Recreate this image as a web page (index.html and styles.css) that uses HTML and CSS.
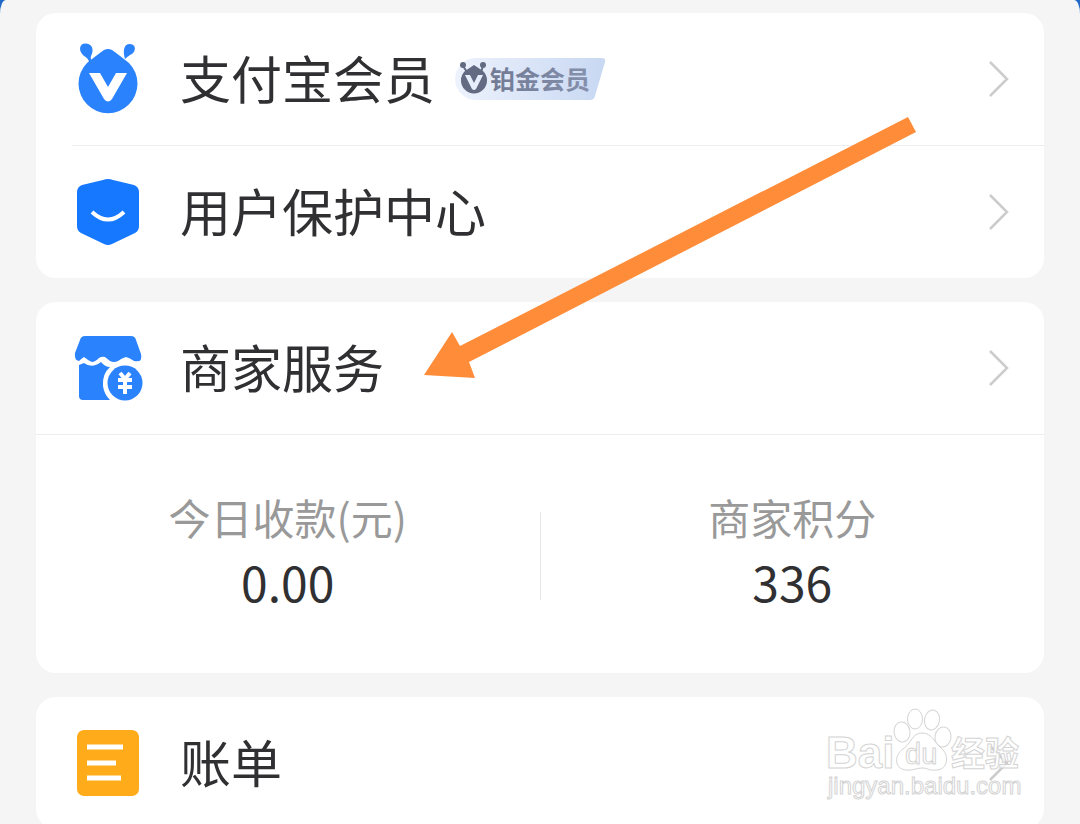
FILE: index.html
```
<!DOCTYPE html>
<html lang="zh-CN">

<head>
  <meta charset="UTF-8">
  <meta name="viewport" content="width=device-width, initial-scale=1.0">
  <title>支付宝</title>
  <link rel="stylesheet" href="styles.css">
</head>

<body>
  <main class="page">
    <section class="card">
      <a class="row" href="#">
        <svg class="icon" viewBox="0 7 72 72" aria-hidden="true">
          <path fill="#2a82fc" d="M15 27Q25 19 32 14Q36 12 40 14Q47 19 57 27A29.500 29.500 0 1 1 15 27Z" />
          <path fill="#2a82fc" d="M16 31C18 25 17 23 12 20C6 15 7 7 14 7.500C21 8 22 15 19 20C18 24 20 25 23 25Z" />
          <path fill="#2a82fc" d="M53 23C51 16 51 8 58 8C65 8 64 17 58 19Q55 21 53 23Z" />
          <path fill="#fff" d="M17 37H28L36 51L44 37H55L40 63Q36 68 32 63Z" />
        </svg>
        <span class="row__title">支付宝会员</span>
        <svg class="tag" viewBox="0 0 152 44">
          <defs>
            <linearGradient id="tag-bg">
              <stop offset="0" stop-color="#edf3fd" />
              <stop offset=".45" stop-color="#dce6f8" />
              <stop offset="1" stop-color="#c8d8f2" />
            </linearGradient>
            <linearGradient id="tag-ink">
              <stop offset="0" stop-color="#707a94" />
              <stop offset="1" stop-color="#8590ad" />
            </linearGradient>
          </defs>
          <path fill="url(#tag-bg)" d="M21 1H147Q151 1 150 5L140 39Q139 43 135 43H21A21 21 0 0 1 21 1Z" />
          <path fill="#626b82" d="M10 14L19 8L28 14A13 13 0 1 1 10 14Z" />
          <circle cx="8" cy="8" r="3" fill="#626b82" />
          <circle cx="28" cy="8" r="3" fill="#626b82" />
          <path fill="none" stroke="#626b82" stroke-width="2" d="M8 9L12 15M28 9L26 15" />
          <path fill="#e7eefb" d="M10 18H15L19 26L23 18H28L21 32Q19 34 17 32Z" />
          <text class="tag__text" x="35" y="32" fill="url(#tag-ink)">铂金会员</text>
        </svg>
        <svg class="chevron" viewBox="0 0 22 38" aria-hidden="true"><path d="M2 2L19 19L2 36" /></svg>
      </a>
      <hr class="divider divider--inset">
      <a class="row" href="#">
        <svg class="icon" viewBox="0 0 72 72" aria-hidden="true">
          <path fill="#1677ff" d="M10 9L31 4Q36 2 41 4L62 9Q67 11 67 16V50Q67 55 63 57L40 68Q36 70 32 68L9 57Q5 55 5 50V16Q5 11 10 9Z" />
          <path fill="none" stroke="#fff" stroke-width="4" d="M20 36Q36 51 52 36" />
        </svg>
        <span class="row__title">用户保护中心</span>
        <svg class="chevron" viewBox="0 0 22 38" aria-hidden="true"><path d="M2 2L19 19L2 36" /></svg>
      </a>
    </section>

    <section class="card">
      <a class="row" href="#">
        <svg class="icon" viewBox="0 0 72 72" aria-hidden="true">
          <path fill="#2a82fc" d="M8 8Q9 4 13 4H59Q63 4 64 8L69 22Q71 31 62 29Q58 26 54 25Q50 26 46 29Q42 31 38 29L33 25Q30 24 27 26Q23 30 20 30Q17 29 12 25Q9 27 7 29Q2 28 3 21Z" />
          <path fill="#2a82fc" d="M7 33L12 31Q20 37 29 30Q33 35 38 35Q30 42 31 54Q32 62 38 68H11Q7 68 7 64Z" />
          <circle cx="53" cy="51" r="17.500" fill="#2a82fc" />
          <path fill="none" stroke="#fff" stroke-width="4" d="M48 41L53 47L58 41M46 48H60M46 55H60M53 47V62" />
        </svg>
        <span class="row__title">商家服务</span>
        <svg class="chevron" viewBox="0 0 22 38" aria-hidden="true"><path d="M2 2L19 19L2 36" /></svg>
      </a>
      <hr class="divider">
      <div class="stats">
        <div class="stat">
          <div class="stat__label">今日收款(元)</div>
          <div class="stat__value">0.00</div>
        </div>
        <div class="stats__line"></div>
        <div class="stat">
          <div class="stat__label">商家积分</div>
          <div class="stat__value">336</div>
        </div>
      </div>
    </section>

    <section class="card">
      <a class="row" href="#">
        <svg class="icon" viewBox="0 0 72 72" aria-hidden="true">
          <rect x="5" y="3" width="62" height="66" rx="7" fill="#ffab1a" />
          <path fill="none" stroke="#fff" stroke-width="5" d="M15 20H51M15 36H44M15 51H49" />
        </svg>
        <span class="row__title">账单</span>
        <svg class="chevron" viewBox="0 0 22 38" aria-hidden="true"><path d="M2 2L19 19L2 36" /></svg>
      </a>
    </section>

    <!-- pointer to the merchant row -->
    <svg class="arrow" viewBox="0 0 492 262" aria-hidden="true">
      <path fill="#ff8c38" d="M0 258L28 215L36 229L484 0L492 15L45 245L51 261Z" />
    </svg>

    <!-- watermark -->
    <svg class="watermark" viewBox="0 0 200 100">
      <g class="watermark__shape">
        <text class="watermark__name" x="2" y="64">Bai</text>
        <ellipse cx="78" cy="28" rx="8" ry="10" transform="rotate(-8 78 28)" />
        <ellipse cx="91" cy="15" rx="7.500" ry="10" />
        <ellipse cx="108" cy="16" rx="7.500" ry="10" transform="rotate(12 108 16)" />
        <ellipse cx="119" cy="33" rx="8" ry="10" transform="rotate(8 119 33)" />
        <path d="M98 29C108 29 111 39 117 44C126 51 124 66 112 66C105 67 104 64 98 64C92 64 88 67 82 66C70 65 70 51 79 45C87 40 88 29 98 29Z" />
        <text class="watermark__du" x="81" y="60">du</text>
        <text class="watermark__cjk" x="127" y="62">经验</text>
        <text class="watermark__url" x="4" y="90">jingyan.baidu.com</text>
      </g>
    </svg>
  </main>
</body>

</html>
```
FILE: styles.css
```
* {
  box-sizing: border-box;
}

body {
  margin: 0;
  background: #2069c8;
  font-family: "Noto Sans CJK SC", sans-serif;
  color: #303033;
}

.page {
  position: relative;
  display: flex;
  flex-direction: column;
  gap: 24px;
  height: 100vh;
  padding: 13px 36px 0;
  overflow: hidden;
  background: #f5f5f5;
  border-radius: 6px 6px 0 0 / 14px 14px 0 0;
}

.card {
  flex: none;
  background: #fff;
  border-radius: 20px;
}

.row {
  display: flex;
  align-items: center;
  height: 132px;
  padding: 0 34px 0 36px;
  color: inherit;
  text-decoration: none;
}

.icon {
  flex: none;
  width: 72px;
  height: 72px;
  margin-right: 36px;
}

.row__title {
  padding-bottom: 4px;
  font-size: 51px;
  line-height: 72px;
  white-space: nowrap;
}

.tag {
  flex: none;
  width: 152px;
  height: 44px;
  margin-left: 20px;
}

.tag__text {
  font-size: 25px;
  font-weight: 700;
}

.chevron {
  flex: none;
  width: 22px;
  height: 38px;
  margin-left: auto;
  fill: none;
  stroke: #ccc;
  stroke-width: 2.5;
}

.divider {
  height: 1px;
  margin: 0;
  border: 0;
  background: #ededed;
}

.divider--inset {
  margin-left: 36px;
}

.stats {
  display: flex;
  justify-content: center;
  padding: 50px 0 60px;
}

.stat {
  flex: 1;
  text-align: center;
}

.stat__label {
  font-size: 42px;
  line-height: 64px;
  color: #999;
}

.stat__value {
  font-size: 48px;
  line-height: 64px;
}

.stats__line {
  width: 1px;
  height: 88px;
  margin-top: 27px;
  background: #e8e8e8;
}

.arrow {
  position: absolute;
  top: 117px;
  left: 424px;
  width: 492px;
  height: 262px;
  pointer-events: none;
}

.watermark {
  position: absolute;
  right: 56px;
  bottom: 20px;
  width: 200px;
  height: 100px;
  pointer-events: none;
}

.watermark__shape {
  fill: rgba(255, 255, 255, 0.8);
  stroke: #d4d4d4;
  stroke-width: 1;
}

.watermark__name {
  font: 700 44px "Liberation Sans", sans-serif;
}

.watermark__du {
  font: 29px "Liberation Sans", sans-serif;
}

.watermark__cjk {
  font-size: 34px;
  font-weight: 700;
}

.watermark__url {
  font: 24px "Liberation Sans", sans-serif;
}
```
